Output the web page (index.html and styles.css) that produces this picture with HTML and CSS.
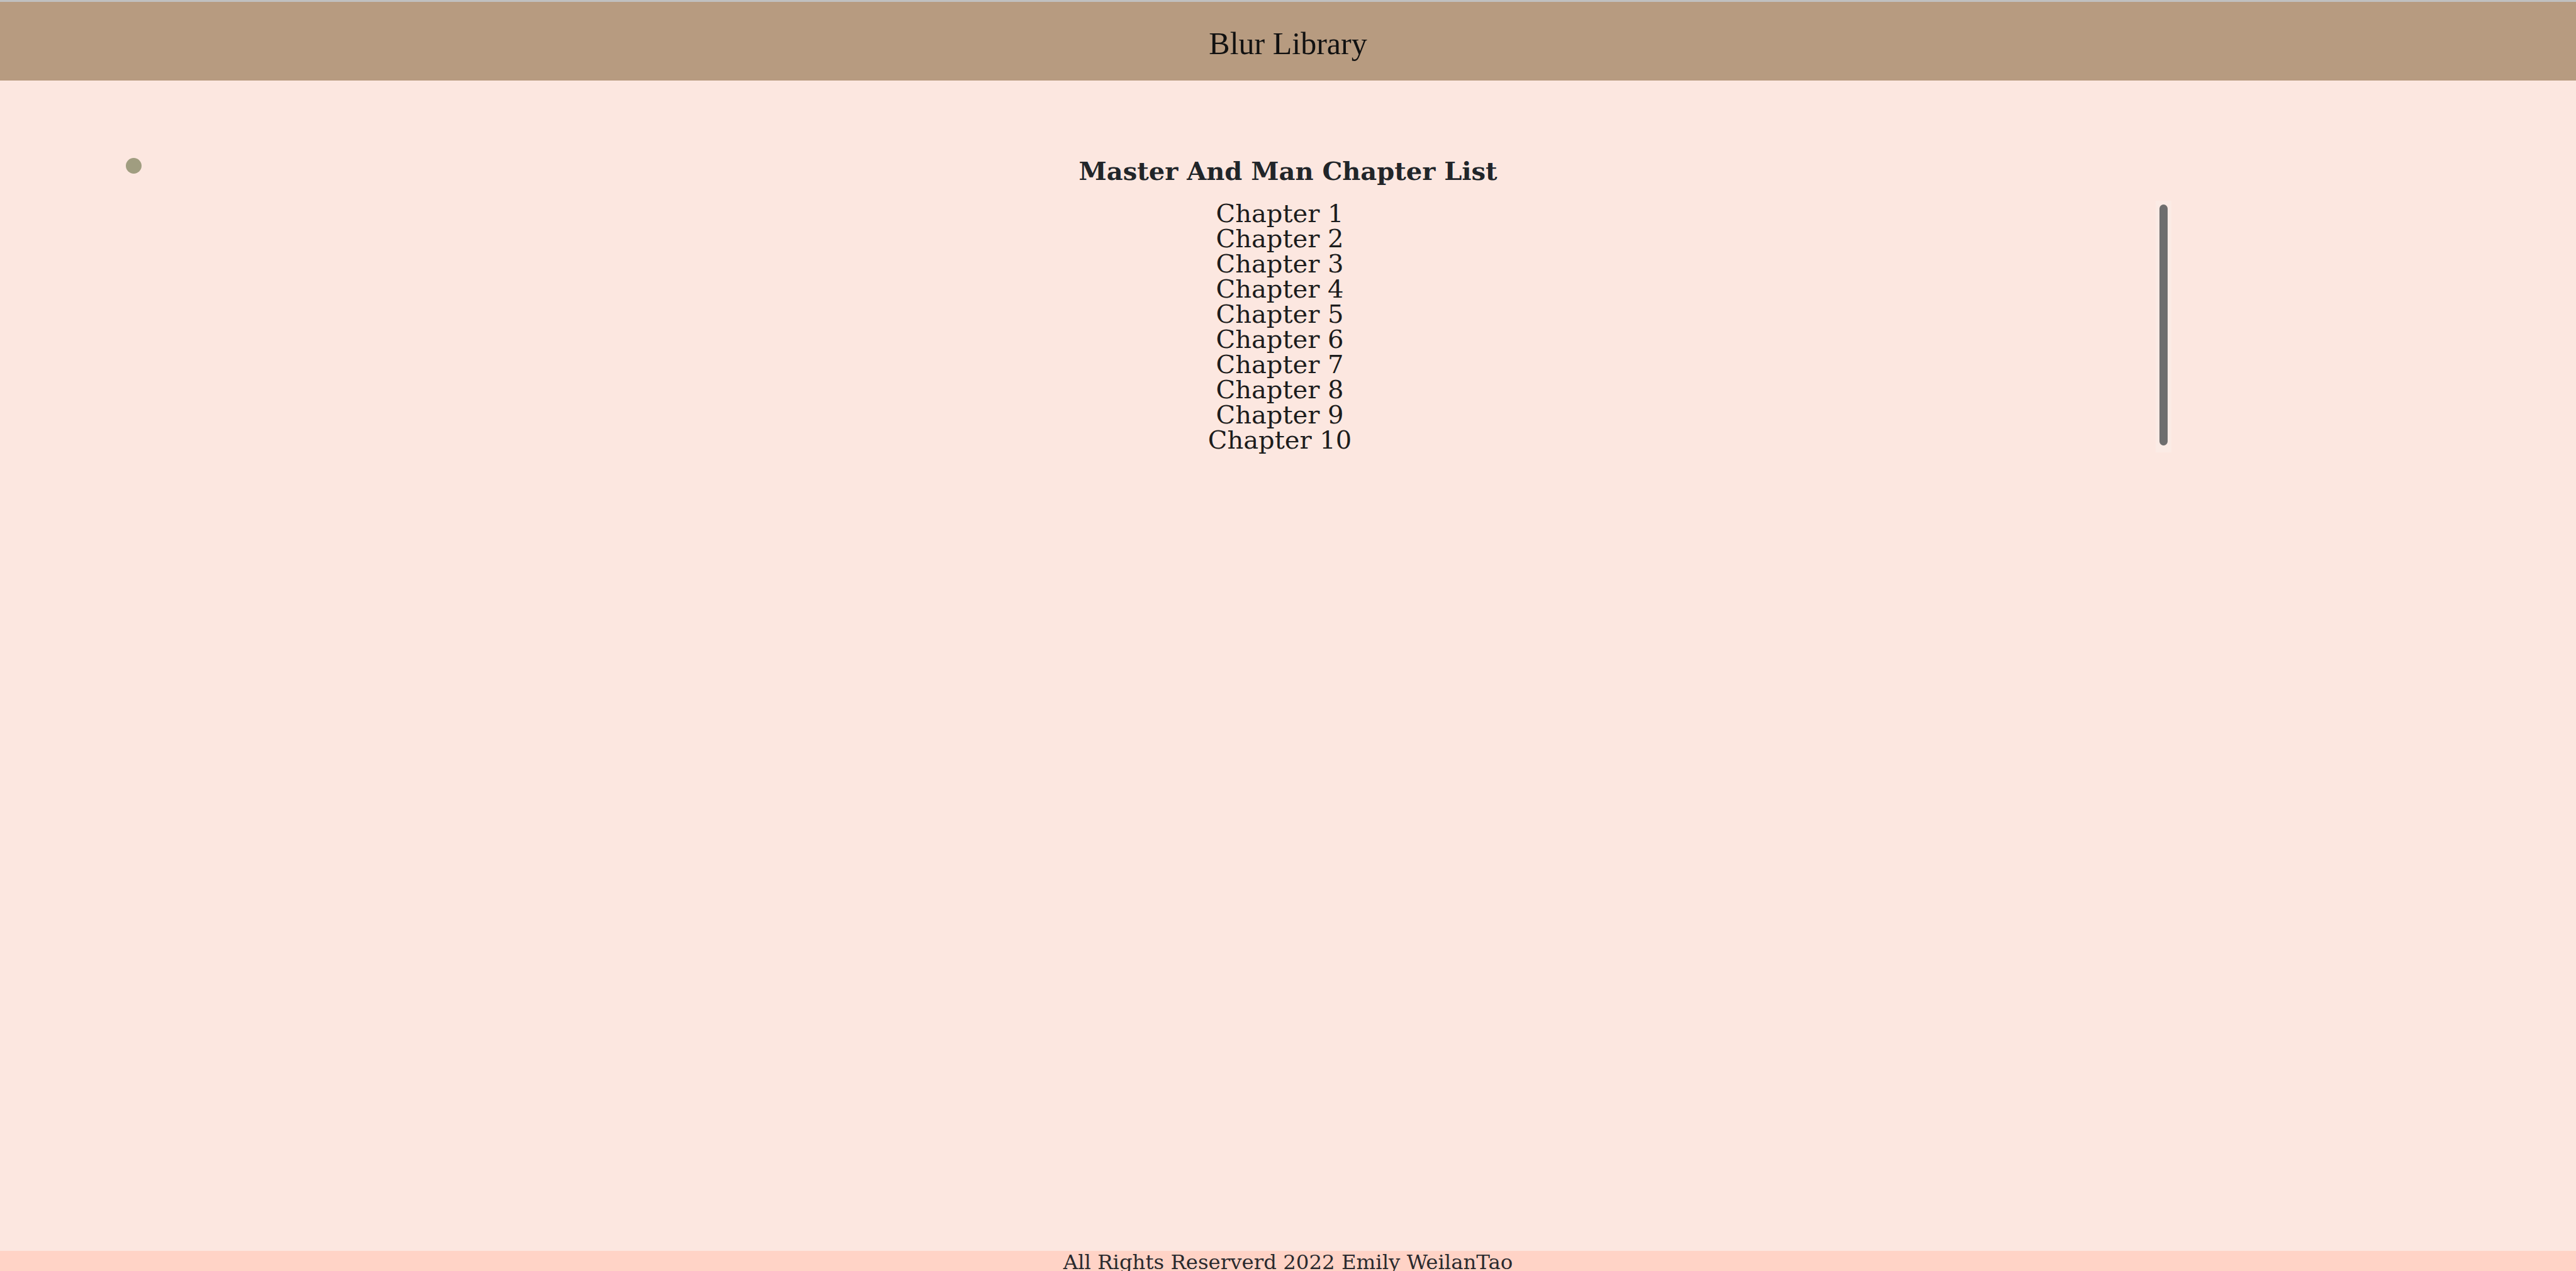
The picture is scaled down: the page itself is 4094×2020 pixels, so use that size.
FILE: index.html
```html
<!DOCTYPE html>
<html lang="en">
<head>
<meta charset="utf-8">
<title>Blur Library</title>
<link rel="stylesheet" href="styles.css">
</head>
<body>
<header class="site-header">
  <h1 class="brand">Blur Library</h1>
</header>
<main class="content">
  <div class="title-row">
    <span class="dot"></span>
    <h2 class="list-title">Master And Man Chapter List</h2>
    <span class="spacer"></span>
  </div>
  <div class="list-wrap">
    <ul class="chapters">
      <li><a href="#">Chapter 1</a></li>
      <li><a href="#">Chapter 2</a></li>
      <li><a href="#">Chapter 3</a></li>
      <li><a href="#">Chapter 4</a></li>
      <li><a href="#">Chapter 5</a></li>
      <li><a href="#">Chapter 6</a></li>
      <li><a href="#">Chapter 7</a></li>
      <li><a href="#">Chapter 8</a></li>
      <li><a href="#">Chapter 9</a></li>
      <li><a href="#">Chapter 10</a></li>
    </ul>
    <div class="scroll-track" aria-hidden="true"><div class="scroll-thumb"></div></div>
  </div>
</main>
<footer class="site-footer">All Rights Reserverd 2022 Emily WeilanTao</footer>
</body>
</html>
```
FILE: styles.css
```css
html, body {
  margin: 0;
  padding: 0;
}
body {
  background: #fce7e0;
  font-family: "DejaVu Serif", serif;
  color: #212529;
  min-height: 2025px;
  display: flex;
  flex-direction: column;
}
.site-header {
  background: #b79b80;
  border-top: 3px solid #c0c0c0;
  height: 125px;
  display: flex;
  align-items: center;
  justify-content: center;
}
.brand {
  margin: 0;
  font-family: "Liberation Serif", "Times New Roman", serif;
  font-weight: normal;
  font-size: 50px;
  line-height: 1;
  color: #111;
  position: relative;
  top: 3px;
}
.content {
  flex: 1;
  padding-top: 121px;
}
.title-row {
  display: grid;
  grid-template-columns: 1fr auto 1fr;
  align-items: start;
}
.dot {
  justify-self: start;
  width: 25px;
  height: 25px;
  border-radius: 50%;
  background: #a09d80;
  margin-left: 200px;
  margin-top: 2px;
}
.list-title {
  margin: 0;
  font-family: "DejaVu Serif", serif;
  font-weight: bold;
  font-size: 40px;
  line-height: 46px;
  color: #212529;
}
.list-wrap {
  margin: 24px 643px 0 642px;
  height: 400px;
  display: flex;
}
.chapters {
  flex: 1;
  list-style: none;
  margin: 0;
  padding: 0;
  text-align: center;
}
.chapters li {
  font-size: 40px;
  line-height: 40px;
}
.chapters a {
  color: #1c1c1c;
  text-decoration: none;
}
.scroll-track {
  width: 25px;
  background: #fbebe5;
  padding: 6px 6px 11px;
  box-sizing: border-box;
  display: flex;
}
.scroll-thumb {
  flex: 1;
  background: #6e6e6e;
  border-radius: 7px;
}
.site-footer {
  background: #ffd3c6;
  text-align: center;
  font-size: 32.4px;
  line-height: 37px;
  color: #2a2a2e;
}
```
